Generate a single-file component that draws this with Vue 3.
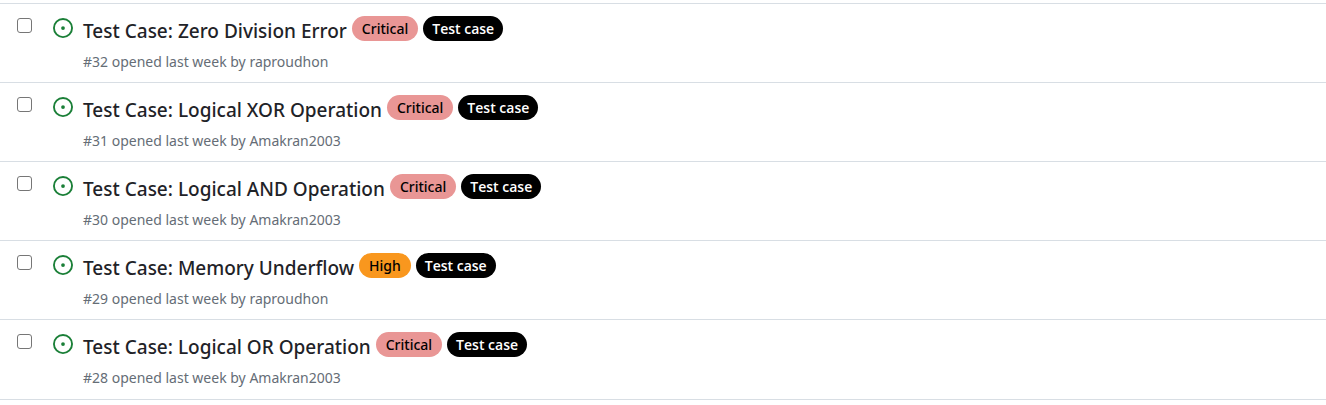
<script setup>
const issues = [
  { id: 32, title: 'Zero Division Error', author: 'raproudhon', level: 'Critical' },
  { id: 31, title: 'Logical XOR Operation', author: 'Amakran2003', level: 'Critical' },
  { id: 30, title: 'Logical AND Operation', author: 'Amakran2003', level: 'Critical' },
  { id: 29, title: 'Memory Underflow', author: 'raproudhon', level: 'High' },
  { id: 28, title: 'Logical OR Operation', author: 'Amakran2003', level: 'Critical' },
]
</script>

<template>
  <main class="issues">
    <article v-for="issue in issues" :key="issue.id" class="issue">
      <input type="checkbox" class="check" :aria-label="`Select issue ${issue.id}`" />
      <svg class="state" viewBox="0 0 16 16" aria-hidden="true">
        <path d="M8 9.5a1.5 1.5 0 1 0 0-3 1.5 1.5 0 0 0 0 3Z" />
        <path d="M8 0a8 8 0 1 1 0 16A8 8 0 0 1 8 0ZM1.5 8a6.5 6.5 0 1 0 13 0 6.5 6.5 0 0 0-13 0Z" />
      </svg>
      <div class="body">
        <div class="heading">
          <a href="#" class="title">Test Case: {{ issue.title }}</a>
          <a href="#" class="label" :class="issue.level.toLowerCase()">{{ issue.level }}</a>
          <a href="#" class="label test">Test case</a>
        </div>
        <div class="meta">#{{ issue.id }} opened last week by <a href="#">{{ issue.author }}</a></div>
      </div>
    </article>
  </main>
</template>

<style>
body {
  background: #fff;
}
</style>

<style scoped>
.issues {
  margin-top: 3px;
  border-bottom: 1px solid #d8dee4;
  font-family: "Segoe UI", "Noto Sans", "Open Sans", sans-serif;
}
.issue {
  display: flex;
  align-items: flex-start;
  padding: 0 17px 10px;
  border-top: 1px solid #d8dee4;
}
.issue:last-child {
  padding-bottom: 11px;
}
a {
  color: inherit;
  text-decoration: none;
}
.check {
  appearance: none;
  box-sizing: border-box;
  width: 15px;
  height: 15px;
  margin: 14px 21px 0 0;
  border: 1px solid #767676;
  border-radius: 3px;
  background: #fff;
}
.check:checked {
  background: #0969da;
}
.state {
  width: 20px;
  height: 20px;
  margin: 14px 10px 0 0;
  fill: #1a7f37;
}
.heading {
  display: flex;
  align-items: flex-start;
  gap: 5px;
  padding-top: 12px;
}
.title {
  padding-top: 1px;
  color: #1f2328;
  font-size: 19px;
  font-weight: 500;
  line-height: 28px;
}
.label {
  padding: 0 10px;
  border-radius: 13px;
  font-size: 14px;
  font-weight: 500;
  line-height: 25px;
}
.critical {
  background: #e99695;
  color: #000;
}
.high {
  background: #f9971e;
  color: #000;
}
.test {
  padding: 0 9px;
  background: #000;
  color: #fff;
  font-family: "Segoe UI", "Open Sans", sans-serif;
  font-weight: 600;
}
.meta {
  margin-top: 7px;
  color: #656d76;
  font-size: 14px;
  line-height: 20px;
}
</style>
